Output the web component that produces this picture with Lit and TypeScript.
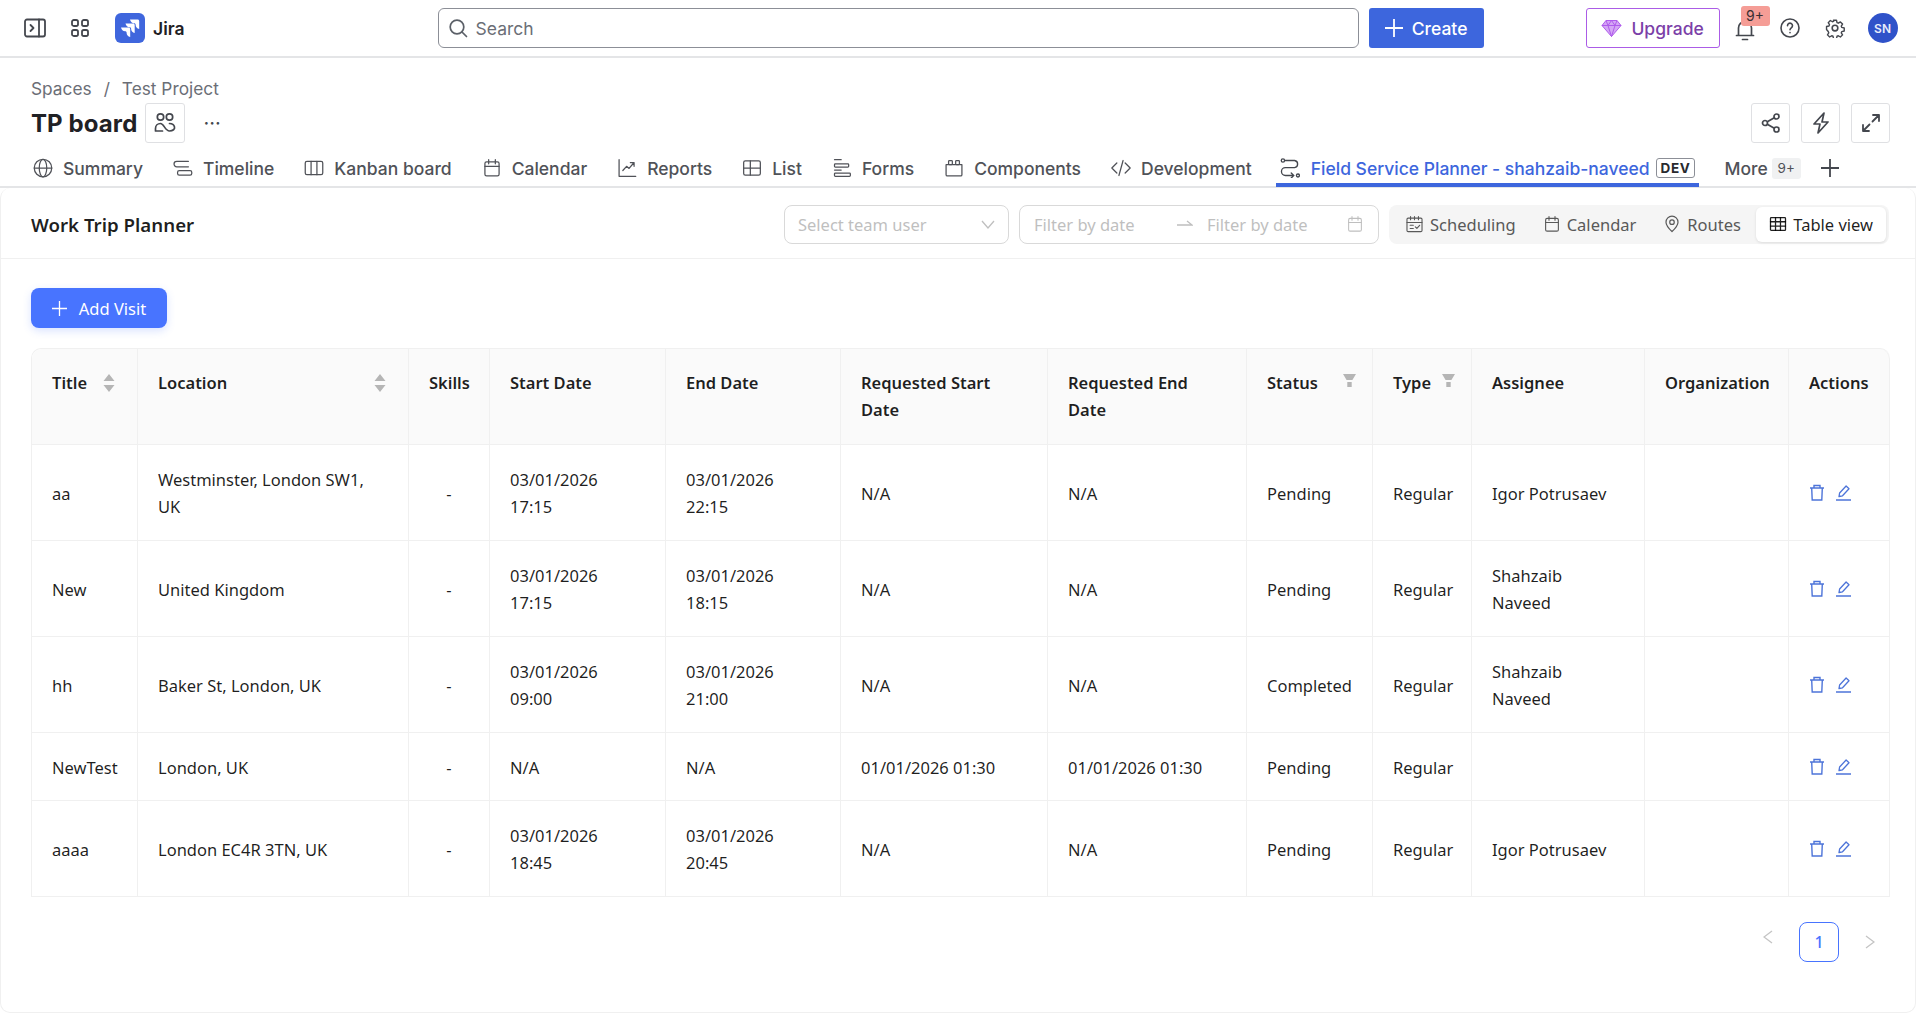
import { LitElement, html, css, svg, TemplateResult } from "lit";
import { customElement } from "lit/decorators.js";

const icon = (size: number, body: unknown, sw = 1.6): TemplateResult => html`<svg
  width=${size}
  height=${size}
  viewBox="0 0 24 24"
  fill="none"
  stroke="currentColor"
  stroke-width=${sw}
  stroke-linecap="round"
  stroke-linejoin="round"
>${body}</svg>`;

const calendarPaths = svg`<rect x="3.5" y="4.5" width="17" height="17" rx="2"/><path d="M3.5 10h17M8 2v5M16 2v5"/>`;

const tabs: { label: string; icon: unknown }[] = [
  { label: "Summary", icon: svg`<circle cx="12" cy="12" r="10.500"/><ellipse cx="12" cy="12" rx="4.500" ry="10.500"/><path d="M1.500 12h21"/>` },
  { label: "Timeline", icon: svg`<path d="M18.500 4H4.500a3 3 0 0 0 0 6.500h14"/><rect x="5.500" y="15" width="17" height="5.500" rx="2"/>` },
  { label: "Kanban board", icon: svg`<rect x="1.500" y="4" width="21" height="16" rx="2"/><path d="M8.500 4v16M15.500 4v16"/>` },
  { label: "Calendar", icon: calendarPaths },
  { label: "Reports", icon: svg`<path d="M2.500 2v20h20"/><path d="M7 15l4.500-5 3 2.500L20 6M16 5.500h4.500V10"/>` },
  { label: "List", icon: svg`<rect x="2" y="3.500" width="20" height="17" rx="2"/><path d="M2 12h20M10 3.500v17"/>` },
  { label: "Forms", icon: svg`<path d="M3 2h8"/><rect x="3" y="7" width="17" height="4" rx="1"/><path d="M3 14.500h8"/><rect x="3" y="18" width="19" height="4" rx="1"/>` },
  { label: "Components", icon: svg`<path d="M2.500 8h19v12a1.500 1.500 0 0 1-1.500 1.500H4A1.500 1.500 0 0 1 2.500 20z"/><rect x="5.500" y="3" width="4.500" height="5" rx="1"/><rect x="14" y="3" width="4.500" height="5" rx="1"/>` },
  { label: "Development", icon: svg`<path d="M7 6l-6 6 6 6M17 6l6 6-6 6M14.500 3l-5 18"/>` },
];

type Row = {
  title: string;
  location: string;
  start: string;
  end: string;
  reqStart: string;
  reqEnd: string;
  status: string;
  assignee: string;
};

const rows: Row[] = [
  { title: "aa", location: "Westminster, London SW1, UK", start: "03/01/2026 17:15", end: "03/01/2026 22:15", reqStart: "N/A", reqEnd: "N/A", status: "Pending", assignee: "Igor Potrusaev" },
  { title: "New", location: "United Kingdom", start: "03/01/2026 17:15", end: "03/01/2026 18:15", reqStart: "N/A", reqEnd: "N/A", status: "Pending", assignee: "Shahzaib Naveed" },
  { title: "hh", location: "Baker St, London, UK", start: "03/01/2026 09:00", end: "03/01/2026 21:00", reqStart: "N/A", reqEnd: "N/A", status: "Completed", assignee: "Shahzaib Naveed" },
  { title: "NewTest", location: "London, UK", start: "N/A", end: "N/A", reqStart: "01/01/2026 01:30", reqEnd: "01/01/2026 01:30", status: "Pending", assignee: "" },
  { title: "aaaa", location: "London EC4R 3TN, UK", start: "03/01/2026 18:45", end: "03/01/2026 20:45", reqStart: "N/A", reqEnd: "N/A", status: "Pending", assignee: "Igor Potrusaev" },
];

const colWidths = [106, 271, 81, 176, 175, 207, 199, 126, 99, 173, 144, 101];

const sorter = html`<svg class="sorter" width="12" height="18" viewBox="0 0 12 18" fill="currentColor"><path d="M6 0l5.500 7H.5zM6 18l5.500-7H.5z"/></svg>`;
const funnel = html`<svg class="funnel" width="13" height="14" viewBox="0 0 13 14" fill="currentColor"><path d="M0 0h13l-3.600 6H3.600zM4.300 8h4.400v5H4.300z"/></svg>`;

@customElement("app-root")
export class AppRoot extends LitElement {
  private renderTopBar(): TemplateResult {
    return html`
      <header class="topbar">
        <span class="top-icon sidebar">
          <svg width="22" height="20" viewBox="0 0 22 20" fill="none" stroke="currentColor" stroke-width="1.800" stroke-linecap="round" stroke-linejoin="round"><rect x="1" y="1.500" width="20" height="17" rx="2"/><path d="M15 1.500v17M6.500 7l3 3-3 3"/></svg>
        </span>
        <span class="top-icon apps">
          <svg width="18" height="18" viewBox="0 0 18 18" fill="none" stroke="currentColor" stroke-width="1.800"><rect x="1" y="1" width="6" height="6" rx="1.800"/><rect x="11" y="1" width="6" height="6" rx="1.800"/><rect x="1" y="11" width="6" height="6" rx="1.800"/><rect x="11" y="11" width="6" height="6" rx="1.800"/></svg>
        </span>
        <span class="logo">
          <svg width="30" height="30" viewBox="0 0 30 30"><rect width="30" height="30" rx="6" fill="#3f66dd"/><path fill="#fff" d="M6 14.500h7.500c1 0 1.700.7 1.700 1.700V24c-2.200-.4-3.600-2-3.600-4.200 0-1-.5-1.500-1.500-1.500C8 18.300 6.500 16.800 6 14.500zM10.500 10.500h7.500c1 0 1.700.7 1.700 1.700V20c-2.200-.4-3.600-2-3.600-4.200 0-1-.5-1.500-1.500-1.500-2.100 0-3.600-1.500-4.100-3.800zM15 6.500h7.500c1 0 1.700.7 1.700 1.700V16c-2.200-.4-3.600-2-3.600-4.200 0-1-.5-1.500-1.500-1.500-2.100 0-3.600-1.500-4.100-3.800z"/></svg>
        </span>
        <span class="product">Jira</span>
        <div class="search">
          <svg width="20" height="20" viewBox="0 0 20 20" fill="none" stroke="#5b6068" stroke-width="1.700" stroke-linecap="round"><circle cx="9" cy="9" r="6.800"/><path d="M14 14l4.500 4.500"/></svg>
          <span>Search</span>
        </div>
        <button class="create">
          <svg width="18" height="18" viewBox="0 0 18 18" stroke="#fff" stroke-width="1.800"><path d="M9 0v18M0 9h18"/></svg>
          Create
        </button>
        <button class="upgrade">
          <svg width="21" height="19" viewBox="0 0 21 19" fill="#b05cec" stroke="#b05cec" stroke-width="1" stroke-linejoin="round"><path d="M5 1.500h11l4 5-9.500 11L1 6.500z" fill-opacity=".55"/><path d="M1 6.500h19M7 6.500l3.500 11 3.500-11M5 1.500l2 5 3.500-5 3.500 5 2-5" fill="none"/></svg>
          Upgrade
        </button>
        <span class="bell">
          <svg width="20" height="22" viewBox="0 0 20 22" fill="none" stroke="#44474e" stroke-width="1.700" stroke-linecap="round" stroke-linejoin="round"><path d="M3.500 16.500V9a6.500 6.500 0 0 1 13 0v7.500M1.500 16.500h17M7.500 20.500h5"/></svg>
          <span class="badge">9+</span>
        </span>
        <span class="top-icon help">
          <svg width="20" height="20" viewBox="0 0 20 20" fill="none" stroke="currentColor" stroke-width="1.600" stroke-linecap="round"><circle cx="10" cy="10" r="9"/><path d="M7.500 7.700a2.500 2.500 0 1 1 3.800 2.100c-.9.600-1.300 1-1.300 2"/><path d="M10 14.600v.2"/></svg>
        </span>
        <span class="top-icon gear">
          <svg width="20" height="20" viewBox="0 0 24 24" fill="none" stroke="currentColor" stroke-width="1.900" stroke-linejoin="round"><circle cx="12" cy="12" r="3.400"/><path d="M10 1.500h4l.7 3.200 1.800.8 2.800-1.700 2.900 2.900-1.700 2.800.7 1.700 3.300.8v4l-3.300.8-.7 1.700 1.700 2.800-2.900 2.900-2.800-1.700-1.800.7-.7 3.300h-4l-.7-3.300-1.800-.7-2.800 1.700-2.900-2.900 1.700-2.800-.7-1.700L.5 14v-4l3.300-.8.700-1.700-1.700-2.800 2.900-2.900 2.800 1.700 1.800-.8z" transform="translate(1.400 1.400) scale(.885)"/></svg>
        </span>
        <span class="avatar">SN</span>
      </header>
    `;
  }

  private renderProject(): TemplateResult {
    return html`
      <section class="project">
        <div class="crumbs"><span>Spaces</span><span class="slash">/</span><span>Test Project</span></div>
        <div class="title-row">
          <h1>TP board</h1>
          <span class="square people">
            <svg width="22" height="22" viewBox="0 0 22 22" fill="none" stroke="currentColor" stroke-width="1.700" stroke-linecap="round"><circle cx="6.500" cy="5" r="3.200"/><circle cx="15.500" cy="5" r="3.200"/><path d="M1.500 19v-2.500c0-3 2.300-5 5-5 3.500 0 4.500 7.500 9 7.500 3.500 0 5.500-2 5-4-.5-2-2.500-3.500-5-3.500M1.500 19h7"/></svg>
          </span>
          <span class="dots">···</span>
          <span class="spring"></span>
          <div class="right-actions">
            <span class="square">
              <svg width="20" height="20" viewBox="0 0 20 20" fill="none" stroke="currentColor" stroke-width="1.700"><circle cx="4" cy="10" r="2.500"/><circle cx="15.500" cy="3.500" r="2.500"/><circle cx="15.500" cy="16.500" r="2.500"/><path d="M6.300 8.800l7-4M6.300 11.200l7 4"/></svg>
            </span>
            <span class="square">
              <svg width="20" height="22" viewBox="0 0 20 22" fill="none" stroke="currentColor" stroke-width="1.700" stroke-linejoin="round"><path d="M13 1L3 12h6l-2 9 10-11h-6z"/></svg>
            </span>
            <span class="square">
              <svg width="20" height="20" viewBox="0 0 20 20" fill="none" stroke="currentColor" stroke-width="1.800" stroke-linecap="round" stroke-linejoin="round"><path d="M11.500 8.500L18 2M12 2h6v6M8.500 11.500L2 18M8 18H2v-6"/></svg>
            </span>
          </div>
        </div>
        <nav class="tabs">
          ${tabs.map((t) => html`<span class="tab">${icon(20, t.icon, 1.5)}${t.label}</span>`)}
          <span class="tab active">
            <svg width="20" height="20" viewBox="0 0 24 24" fill="none" stroke="#44474e" stroke-width="1.600" stroke-linecap="round"><circle cx="3.500" cy="3" r="2"/><circle cx="21.500" cy="21" r="1.800"/><path d="M6 3h11.500a4.300 4.300 0 0 1 0 8.500h-11a4.300 4.300 0 0 0 0 9.500H16M13.500 18l3 3-3 3"/></svg>
            <span class="active-label">Field Service Planner - shahzaib-naveed</span>
            <span class="dev">DEV</span>
          </span>
          <span class="tab more">More <span class="count">9+</span>
            <svg class="tab-plus" width="20" height="20" viewBox="0 0 20 20" stroke="#44474e" stroke-width="1.800"><path d="M10 1v18M1 10h18"/></svg>
          </span>
        </nav>
      </section>
    `;
  }

  private renderPlannerHead(): TemplateResult {
    return html`
      <div class="planner-head">
        <h2>Work Trip Planner</h2>
        <span class="spring"></span>
        <div class="field select">
          <span>Select team user</span>
          <svg width="14" height="9" viewBox="0 0 14 9" fill="none" stroke="#bfbfbf" stroke-width="1.300"><path d="M1 1l6 7 6-7"/></svg>
        </div>
        <div class="field range">
          <span class="date-a">Filter by date</span>
          <svg width="16" height="8" viewBox="0 0 16 8" fill="none" stroke="#bfbfbf" stroke-width="1.300"><path d="M0 5h15L10 1"/></svg>
          <span class="date-b">Filter by date</span>
          <span class="cal">${icon(18, calendarPaths, 1.4)}</span>
        </div>
        <div class="segmented">
          <span class="seg">
            ${icon(19, svg`<rect x="2.500" y="4" width="19" height="17" rx="1.500"/><path d="M2.500 9.500h19M7 2v4M12 2v4M17 2v4M6.500 13h4M6.500 17h4M13 15l2 2 3.500-4"/>`, 1.4)}
            Scheduling
          </span>
          <span class="seg">${icon(18, calendarPaths, 1.5)} Calendar</span>
          <span class="seg">
            ${icon(18, svg`<path d="M12 22c-5-4.800-8-8.500-8-12.500a8 8 0 0 1 16 0c0 4-3 7.700-8 12.500z"/><circle cx="12" cy="9.500" r="3"/>`, 1.6)}
            Routes
          </span>
          <span class="seg on">
            ${icon(18, svg`<rect x="2" y="3.500" width="20" height="17" rx="1"/><path d="M2 9h20M2 14.700h20M8.700 3.500v17M15.300 3.500v17"/>`, 1.7)}
            Table view
          </span>
        </div>
      </div>
    `;
  }

  private renderTable(): TemplateResult {
    return html`
      <table>
        <colgroup>${colWidths.map((w) => html`<col style="width:${w}px" />`)}</colgroup>
        <thead>
          <tr>
            <th><div class="th-flex">Title ${sorter}</div></th>
            <th><div class="th-flex">Location ${sorter}</div></th>
            <th>Skills</th>
            <th>Start Date</th>
            <th>End Date</th>
            <th>Requested Start Date</th>
            <th>Requested End Date</th>
            <th class="filt"><div class="th-flex">Status ${funnel}</div></th>
            <th class="filt"><div class="th-flex">Type ${funnel}</div></th>
            <th>Assignee</th>
            <th>Organization</th>
            <th>Actions</th>
          </tr>
        </thead>
        <tbody>
          ${rows.map(
            (r) => html`<tr>
              <td>${r.title}</td>
              <td>${r.location}</td>
              <td class="center">-</td>
              <td class="narrow">${r.start}</td>
              <td class="narrow">${r.end}</td>
              <td>${r.reqStart}</td>
              <td>${r.reqEnd}</td>
              <td>${r.status}</td>
              <td>Regular</td>
              <td class="assignee">${r.assignee}</td>
              <td></td>
              <td>
                <div class="actions">
                  <svg width="16" height="17" viewBox="0 0 16 17" fill="none" stroke="#4d74d9" stroke-width="1.400"><path d="M1 4h14M5 4V1.500h6V4M2.700 4l.5 12h9.600l.5-12"/></svg>
                  <svg width="17" height="17" viewBox="0 0 17 17" fill="none" stroke="#4d74d9" stroke-width="1.300" stroke-linejoin="round"><path d="M4 12.500l.6-3.500 6.500-7 2.900 2.800-6.500 7zM1 16h15"/></svg>
                </div>
              </td>
            </tr>`
          )}
        </tbody>
      </table>
    `;
  }

  render(): TemplateResult {
    return html`
      ${this.renderTopBar()} ${this.renderProject()}
      <main class="card">
        ${this.renderPlannerHead()}
        <div class="planner-body">
          <button class="add">
            <svg width="15" height="15" viewBox="0 0 15 15" stroke="#fff" stroke-width="1.300"><path d="M7.500 0v15M0 7.500h15"/></svg>
            Add Visit
          </button>
          ${this.renderTable()}
          <div class="pager">
            <svg class="prev" width="10" height="14" viewBox="0 0 10 14" fill="none" stroke="#c4c4c4" stroke-width="1.300"><path d="M9 1L1 7l8 6"/></svg>
            <span class="page">1</span>
            <svg class="next" width="10" height="14" viewBox="0 0 10 14" fill="none" stroke="#c4c4c4" stroke-width="1.300"><path d="M1 1l8 6-8 6"/></svg>
          </div>
        </div>
      </main>
    `;
  }

  static styles = css`
    :host {
      display: block;
      width: 1916px;
      height: 1028px;
      overflow: hidden;
      background: #fff;
      font-family: Inter, "Noto Sans", sans-serif;
      color: #292a2e;
    }

    button {
      font: inherit;
      cursor: pointer;
    }

    h1,
    h2 {
      margin: 0;
    }

    .spring {
      flex: 1;
    }

    .topbar {
      box-sizing: border-box;
      height: 58px;
      display: flex;
      align-items: center;
      border-bottom: 2px solid #e4e5e7;
      padding-left: 24px;
    }

    .topbar > * {
      flex: none;
    }

    .top-icon {
      display: inline-flex;
      color: #44474e;
    }

    .apps {
      margin-left: 25px;
    }

    .logo {
      display: inline-flex;
      margin-left: 26px;
    }

    .product {
      margin-left: 8px;
      font-size: 17.5px;
      font-weight: 600;
      color: #1f2125;
    }

    .search {
      box-sizing: border-box;
      width: 921px;
      height: 40px;
      margin-left: 253px;
      display: flex;
      align-items: center;
      gap: 8px;
      padding-left: 9px;
      border: 1px solid #8c8f97;
      border-radius: 6px;
      font-size: 17.5px;
      color: #6b6e76;
    }

    .create {
      box-sizing: border-box;
      width: 115px;
      height: 40px;
      margin-left: 10px;
      display: flex;
      align-items: center;
      justify-content: center;
      gap: 9px;
      background: #3d66dd;
      color: #fff;
      border: 0;
      border-radius: 3px;
      font-size: 17.5px;
      font-weight: 500;
    }

    .upgrade {
      box-sizing: border-box;
      width: 134px;
      height: 40px;
      margin-left: 102px;
      display: flex;
      align-items: center;
      justify-content: center;
      gap: 9px;
      background: #fff;
      color: #7b3fa8;
      border: 1px solid #ab5ce6;
      border-radius: 3px;
      font-size: 17.5px;
      font-weight: 500;
    }

    .bell {
      position: relative;
      display: inline-flex;
      margin-left: 15px;
      margin-top: 4px;
    }

    .badge {
      position: absolute;
      top: -13px;
      left: 6px;
      width: 29px;
      height: 20px;
      display: flex;
      align-items: center;
      justify-content: center;
      background: #f59d96;
      border-radius: 3px;
      font-size: 14px;
      line-height: 1;
      color: #3a3033;
    }

    .help {
      margin-left: 25px;
    }

    .gear {
      margin-left: 25px;
    }

    .avatar {
      width: 30px;
      height: 30px;
      margin-left: 23px;
      border-radius: 50%;
      background: #2f52c9;
      color: #e8edfb;
      display: flex;
      align-items: center;
      justify-content: center;
      font-size: 12px;
      font-weight: 600;
    }

    .project {
      box-sizing: border-box;
      height: 130px;
      padding: 18px 0 0 31px;
      border-bottom: 2px solid #e4e5e7;
    }

    .crumbs {
      display: flex;
      gap: 12px;
      height: 24px;
      align-items: center;
      font-size: 17.3px;
      color: #6b6e76;
    }

    .title-row {
      display: flex;
      align-items: center;
      height: 40px;
      margin-top: 3px;
    }

    h1 {
      font-size: 24px;
      font-weight: 700;
      color: #1f2125;
      letter-spacing: 0.1px;
    }

    .square {
      box-sizing: border-box;
      height: 40px;
      width: 39px;
      display: flex;
      align-items: center;
      justify-content: center;
      border: 1px solid #dfe0e3;
      border-radius: 3px;
      color: #44474e;
    }

    .people {
      margin-left: 8px;
      width: 40px;
    }

    .dots {
      margin-left: 18px;
      font-size: 20px;
      color: #44474e;
      line-height: 1;
    }

    .right-actions {
      display: flex;
      gap: 11px;
      margin-right: 26px;
    }

    .tabs {
      display: flex;
      align-items: stretch;
      gap: 30px;
      height: 38px;
      margin-top: 6px;
      padding-left: 2px;
    }

    .tab {
      display: flex;
      align-items: center;
      gap: 10px;
      font-size: 17.5px;
      font-weight: 500;
      color: #505258;
      white-space: nowrap;
    }

    .active {
      box-sizing: border-box;
      margin-left: -6px;
      margin-right: -3px;
      padding: 0 4px;
      gap: 11px;
      box-shadow: inset 0 -4px #3d66dd;
    }

    .active-label {
      color: #3d66dd;
    }

    .dev {
      margin-left: -5px;
      box-sizing: border-box;
      height: 20px;
      padding: 0 4px;
      display: flex;
      align-items: center;
      border: 1px solid #8c8f97;
      border-radius: 3px;
      font-size: 13.5px;
      font-weight: 700;
      letter-spacing: 0.6px;
      color: #292a2e;
    }

    .more {
      gap: 4px;
      margin-left: -2px;
    }

    .count {
      width: 29px;
      height: 21px;
      display: flex;
      align-items: center;
      justify-content: center;
      background: #f0f1f2;
      border-radius: 3px;
      font-size: 13.5px;
      font-weight: 400;
      color: #505258;
    }

    .tab-plus {
      margin-left: 15px;
    }

    .card {
      box-sizing: border-box;
      height: 825px;
      border: 1px solid #f0f0f0;
      border-top: 0;
      border-radius: 10px;
      font-family: "Noto Sans", sans-serif;
    }

    .planner-head {
      box-sizing: border-box;
      height: 71px;
      display: flex;
      align-items: center;
      padding: 2px 26px 0 30px;
      border-bottom: 1px solid #f0f0f0;
    }

    h2 {
      font-size: 18.7px;
      font-weight: 600;
      color: rgba(0, 0, 0, 0.88);
    }

    .field {
      box-sizing: border-box;
      height: 39px;
      display: flex;
      align-items: center;
      border: 1px solid #d9d9d9;
      border-radius: 8px;
      font-size: 16.5px;
      color: #bfbfbf;
    }

    .select {
      width: 225px;
      padding: 0 13px;
      justify-content: space-between;
    }

    .range {
      width: 360px;
      margin-left: 10px;
      padding: 0 14px;
    }

    .date-a {
      width: 143px;
    }

    .date-b {
      margin-left: 14px;
    }

    .cal {
      display: inline-flex;
      margin-left: auto;
    }

    .segmented {
      box-sizing: border-box;
      width: 500px;
      height: 39px;
      margin-left: 10px;
      padding: 2px 3px;
      display: flex;
      background: #f5f5f5;
      border-radius: 8px;
      font-size: 16.5px;
      color: #595959;
    }

    .seg {
      display: flex;
      align-items: center;
      gap: 6px;
      padding: 0 13px;
      white-space: nowrap;
    }

    .seg + .seg {
      margin-left: 1px;
    }

    .seg.on {
      margin-left: auto;
      background: #fff;
      color: rgba(0, 0, 0, 0.88);
      border-radius: 6px;
      box-shadow: 0 1px 3px rgba(0, 0, 0, 0.1);
      padding: 0 13px;
    }

    .planner-body {
      padding: 29px 26px 0 30px;
    }

    .add {
      box-sizing: border-box;
      width: 136px;
      height: 40px;
      display: flex;
      align-items: center;
      justify-content: center;
      gap: 12px;
      background: #4874ff;
      color: #fff;
      border: 0;
      border-radius: 8px;
      font-size: 16.5px;
      box-shadow: 0 3px 8px rgba(72, 116, 255, 0.2);
    }

    table {
      width: 1858px;
      margin-top: 20px;
      table-layout: fixed;
      border-collapse: separate;
      border-spacing: 0;
      font-size: 16.5px;
      line-height: 27px;
      color: rgba(0, 0, 0, 0.88);
      border-top: 1px solid #f0f0f0;
      border-left: 1px solid #f0f0f0;
      border-top-left-radius: 10px;
      border-top-right-radius: 10px;
    }

    th,
    td {
      box-sizing: border-box;
      padding: 0 20px;
      border-right: 1px solid #f0f0f0;
      border-bottom: 1px solid #f0f0f0;
      text-align: left;
    }

    th {
      height: 96px;
      vertical-align: top;
      padding-top: 20px;
      font-weight: 600;
      background: #fafafa;
    }

    th:first-child {
      border-top-left-radius: 10px;
    }

    th:last-child {
      border-top-right-radius: 10px;
    }

    td {
      height: 96px;
      vertical-align: middle;
      padding-top: 1px;
    }

    tbody tr:nth-child(4) td {
      height: 68px;
    }

    td.center {
      text-align: center;
    }

    td.narrow {
      padding-right: 40px;
    }

    td.assignee {
      padding-right: 26px;
    }

    .th-flex {
      display: flex;
      justify-content: space-between;
      align-items: center;
      padding-right: 2px;
    }

    .filt .th-flex {
      margin-right: -4px;
      padding-right: 0;
    }

    .sorter,
    .funnel {
      color: #b5b5b5;
      flex: none;
    }

    .funnel {
      transform: translateY(-2px);
    }

    .actions {
      display: flex;
      align-items: center;
      gap: 10px;
      margin-top: -2px;
    }

    .pager {
      display: flex;
      justify-content: flex-end;
      align-items: center;
      gap: 26px;
      margin-top: 25px;
      padding-right: 14px;
    }

    .prev {
      margin-top: -10px;
    }

    .page {
      box-sizing: border-box;
      width: 40px;
      height: 40px;
      display: flex;
      align-items: center;
      justify-content: center;
      border: 1px solid #4874ff;
      border-radius: 8px;
      font-size: 16px;
      font-weight: 500;
      color: #4874ff;
    }
  `;
}
